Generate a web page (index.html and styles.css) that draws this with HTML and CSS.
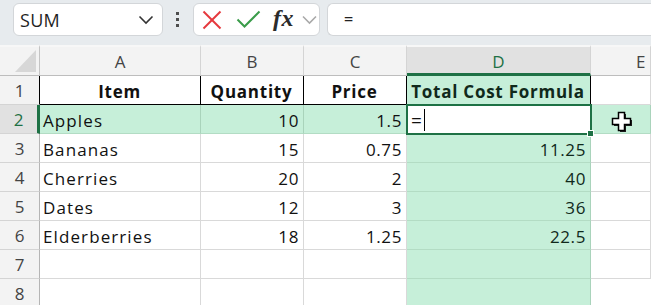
FILE: index.html
```html
<!DOCTYPE html>
<html lang="en">
<head>
    <meta charset="UTF-8"/>
    <title>Sheet1</title>
    <link rel="stylesheet" href="styles.css">
</head>
<body>

    <div class="toolbar">
        <div class="name-box">
            <span class="name-text">SUM</span>
            <svg class="chevron" width="16" height="10" viewBox="0 0 16 10"><polyline points="1.5,1.5 8,8 14.5,1.5" fill="none" stroke="#333" stroke-width="1.6"/></svg>
        </div>
        <div class="grip"><span></span><span></span><span></span></div>
        <div class="fx-box">
            <svg class="icon" width="20" height="20" viewBox="0 0 20 20"><line x1="1.5" y1="1.5" x2="18.5" y2="18.5" stroke="#e5383d" stroke-width="2"/><line x1="18.5" y1="1.5" x2="1.5" y2="18.5" stroke="#e5383d" stroke-width="2"/></svg>
            <svg class="icon" width="25" height="20" viewBox="0 0 25 20"><polyline points="1.5,9.5 8.5,16.5 23.5,1.5" fill="none" stroke="#3a9c4a" stroke-width="2"/></svg>
            <span class="fx">fx</span>
            <svg class="icon" width="15" height="10" viewBox="0 0 15 10"><polyline points="1,1.5 7.5,8 14,1.5" fill="none" stroke="#a9a9a9" stroke-width="1.6"/></svg>
        </div>
        <div class="formula-bar">=</div>
    </div>

    <div class="sheet">
        <div class="hd corner"><span class="corner-mark"></span></div>
        <div class="hd">A</div>
        <div class="hd">B</div>
        <div class="hd">C</div>
        <div class="hd hd-sel">D</div>
        <div class="hd hd-last">E</div>

        <div class="rh rh-top">1</div>
        <div class="c c-title">Item</div>
        <div class="c c-title">Quantity</div>
        <div class="c c-title">Price</div>
        <div class="c c-title sel-col">Total Cost Formula</div>
        <div class="c"></div>

        <div class="rh rh-sel">2</div>
        <div class="c sel-row">Apples</div>
        <div class="c sel-row num">10</div>
        <div class="c sel-row num">1.5</div>
        <div class="c active"><span class="eq">=</span><span class="caret"></span></div>
        <div class="c sel-row"><span class="cursor">
            <svg width="24" height="22" viewBox="0 0 24 22"><path d="M8.5 1.5h6v6h6v6h-6v6h-6v-6h-6v-6h6z" fill="#222" transform="translate(1.5 1.5)"/><path d="M8.5 1.5h6v6h6v6h-6v6h-6v-6h-6v-6h6z" fill="#fff" stroke="#000" stroke-width="1.5"/></svg>
        </span></div>

        <div class="rh">3</div>
        <div class="c">Bananas</div>
        <div class="c num">15</div>
        <div class="c num">0.75</div>
        <div class="c num sel-col">11.25</div>
        <div class="c"></div>

        <div class="rh">4</div>
        <div class="c">Cherries</div>
        <div class="c num">20</div>
        <div class="c num">2</div>
        <div class="c num sel-col">40</div>
        <div class="c"></div>

        <div class="rh">5</div>
        <div class="c">Dates</div>
        <div class="c num">12</div>
        <div class="c num">3</div>
        <div class="c num sel-col">36</div>
        <div class="c"></div>

        <div class="rh">6</div>
        <div class="c">Elderberries</div>
        <div class="c num">18</div>
        <div class="c num">1.25</div>
        <div class="c num sel-col">22.5</div>
        <div class="c"></div>

        <div class="rh">7</div>
        <div class="c"></div>
        <div class="c"></div>
        <div class="c"></div>
        <div class="c sel-col"></div>
        <div class="c"></div>

        <div class="rh">8</div>
        <div class="c"></div>
        <div class="c"></div>
        <div class="c"></div>
        <div class="c sel-col"></div>
        <div class="c"></div>
    </div>

</body>
</html>
```

FILE: styles.css
```css
body {
    margin: 0;
    padding: 0;
    font-family: 'Open Sans', 'Noto Sans', sans-serif;
    background-color: #fff;
    overflow: hidden;
}

.toolbar {
    display: flex;
    align-items: flex-start;
    height: 45px;
    padding: 3px 0 0 13px;
    box-sizing: border-box;
    background-color: #e7ebee;
}

.name-box {
    display: flex;
    align-items: center;
    justify-content: space-between;
    width: 150px;
    height: 33px;
    padding: 0 8px 0 6px;
    box-sizing: border-box;
    background-color: #fff;
    border: 1px solid #d3d6d9;
    border-radius: 6px;
}

.name-text {
    font-size: 18px;
    color: #1f1f1f;
    letter-spacing: 0.3px;
}

.grip {
    display: flex;
    flex-direction: column;
    gap: 3px;
    margin: 9px 14px 0 13px;
}

.grip span {
    width: 3px;
    height: 3px;
    background-color: #4d4d4d;
}

.fx-box {
    display: flex;
    align-items: center;
    width: 127px;
    height: 33px;
    padding-left: 8px;
    box-sizing: border-box;
    background-color: #fff;
    border: 1px solid #d3d6d9;
    border-radius: 6px;
}

.fx-box .icon:nth-child(2) {
    margin-left: 14px;
}

.fx {
    font-family: 'Liberation Serif', serif;
    font-style: italic;
    font-weight: 700;
    font-size: 24px;
    color: #2b2b2b;
    margin: -3px 8px 0 12px;
    letter-spacing: 0.5px;
}

.formula-bar {
    flex: 1;
    height: 33px;
    margin-left: 7px;
    padding-left: 16px;
    box-sizing: border-box;
    background-color: #fff;
    border: 1px solid #d3d6d9;
    border-right: none;
    border-radius: 6px 0 0 6px;
    font-size: 16px;
    line-height: 30px;
    font-weight: 600;
    color: #222;
}

.sheet {
    display: grid;
    grid-template-columns: 40px 161px 103px 103px 184px 1fr;
    grid-template-rows: 31px;
    grid-auto-rows: 29px;
}

.hd {
    display: flex;
    align-items: center;
    justify-content: center;
    background-color: #f3f3f3;
    border-top: 2px solid #f7f7f7;
    border-right: 1px solid #d4d4d4;
    border-bottom: 1px solid #bdbdbd;
    font-size: 17px;
    color: #444;
    padding-top: 1px;
    box-sizing: border-box;
}

.hd-last {
    justify-content: flex-start;
    padding-left: 45px;
}

.corner {
    position: relative;
    border-right-color: #c4c4c4;
}

.corner-mark {
    position: absolute;
    left: 15px;
    top: 3px;
    width: 21px;
    height: 22px;
    background-color: #d7d7d7;
    clip-path: polygon(100% 0, 100% 100%, 0 100%);
}

.hd-sel {
    background-color: #e1e1e1;
    color: #1e7145;
    border-bottom: 3px solid #1e7145;
    padding-top: 3px;
}

.rh {
    display: flex;
    align-items: center;
    justify-content: center;
    background-color: #f3f3f3;
    border-right: 1px solid #b5b5b5;
    border-bottom: 1px solid #d4d4d4;
    font-size: 17px;
    color: #444;
    box-sizing: border-box;
}

.rh-top {
    border-right-color: #000;
}

.rh-sel {
    background-color: #e1e1e1;
    color: #1e7145;
    border-right: 3px solid #1e7145;
}

.c {
    display: flex;
    align-items: center;
    padding: 2px 4px 0 3px;
    box-sizing: border-box;
    border-right: 1px solid #d9d9d9;
    border-bottom: 1px solid #d9d9d9;
    font-size: 17px;
    color: #111;
    letter-spacing: 1.1px;
    white-space: nowrap;
}

.num {
    justify-content: flex-end;
    letter-spacing: 0.6px;
}

.c-title {
    justify-content: center;
    font-weight: 700;
    letter-spacing: 0.75px;
    border-right-color: #000;
    border-bottom-color: #000;
}

.sel-col,
.sel-row {
    background-color: #c6efd9;
    border-right-color: #a9d3bb;
    border-bottom-color: #b3dcc4;
}

.c-title.sel-col {
    border-right-color: #000;
    color: #10291b;
}

.sel-col.num {
    color: #10291b;
}

.active {
    position: relative;
    z-index: 2;
    background-color: #fff;
    outline: 2px solid #1e7145;
    outline-offset: -1px;
    padding-left: 4px;
}

.active::after {
    content: "";
    position: absolute;
    right: -4px;
    bottom: -4px;
    width: 5px;
    height: 5px;
    background-color: #1e7145;
    border: 1px solid #fff;
}

.eq {
    font-size: 19px;
}

.caret {
    display: inline-block;
    width: 1px;
    height: 22px;
    margin-left: 1px;
    background-color: #000;
}

.c:last-child {
    border-right: none;
}

.cursor {
    position: relative;
    left: 16px;
    top: 2px;
}

.cursor svg {
    display: block;
}
```
